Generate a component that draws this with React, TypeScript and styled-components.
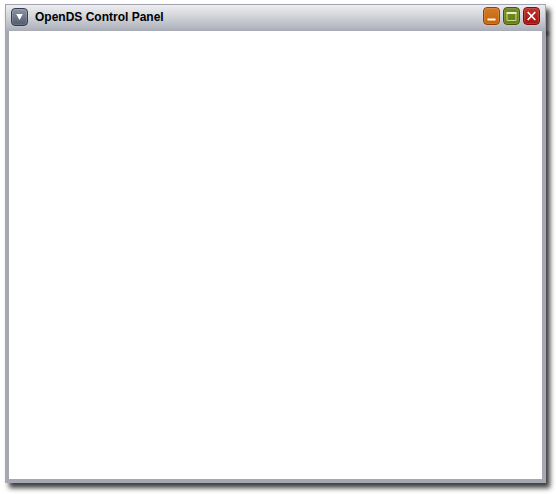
import React from "react";
import styled, { createGlobalStyle } from "styled-components";

const GlobalStyle = createGlobalStyle`
  * { box-sizing: border-box; }
  body { margin: 0; background: #fff; overflow: hidden; }
`;

const Desktop = styled.main`
  width: 556px;
  height: 494px;
  padding: 4px 0 0 5px;
  font-family: "Liberation Sans", Arial, sans-serif;
`;

const WindowFrame = styled.section`
  width: 541px;
  height: 479px;
  display: flex;
  flex-direction: column;
  background: #a5a8b1;
  box-shadow: 4px 5px 5px rgba(0, 0, 0, 0.76);
`;

/* The drop shadow deepens where the title bar's corner ends. */
const TitleBar = styled.header`
  position: relative;
  flex: 0 0 27px;
  display: flex;
  align-items: flex-start;
  padding: 3px 5px 0;
  border: 1px solid #a3a3b1;
  border-bottom-color: #a9acb5;
  background: linear-gradient(#eeeef1 0%, #d8dade 35%, #c5c8cf 65%, #adb1bb 100%);

  &::after {
    content: "";
    position: absolute;
    left: 100%;
    top: 24px;
    width: 5px;
    height: 9px;
    margin-left: 1px;
    background: radial-gradient(ellipse at left, rgba(0, 0, 0, 0.45), transparent 70%);
  }
`;

const Title = styled.h1`
  flex: 1;
  margin: 2px 0 0 7px;
  font-size: 12px;
  line-height: 14px;
  font-weight: bold;
  color: #000;
`;

const Controls = styled.div`
  display: flex;
  gap: 3px;
  margin-top: -1px;
`;

const TitleButton = styled.button<{ $edge: string; $top: string; $bottom: string }>`
  width: 17px;
  height: 18px;
  display: block;
  padding: 0;
  border: 1px solid ${(p) => p.$edge};
  border-radius: 4px;
  background: linear-gradient(${(p) => p.$top}, ${(p) => p.$bottom});
  box-shadow: inset 0 0 1px 1px rgba(255, 255, 255, 0.15), 0 0 1px rgba(255, 255, 255, 0.8);

  svg { display: block; }
`;

const Content = styled.div`
  flex: 1;
  margin: 0 4px 4px;
  background: #fff;
`;

export default function App() {
  return (
    <>
      <GlobalStyle />
      <Desktop>
        <WindowFrame>
          <TitleBar>
            <TitleButton aria-label="Window menu" $edge="#343d4e" $top="#8b94a4" $bottom="#505b6e">
              <svg width="15" height="16" viewBox="0 0 15 16">
                <path d="M4.2 5h6.6l-3.3 6z" fill="#fff" />
              </svg>
            </TitleButton>
            <Title>OpenDS Control Panel</Title>
            <Controls>
              <TitleButton aria-label="Minimize" $edge="#983e06" $top="#d17a2b" $bottom="#cb6100">
                <svg width="15" height="16" viewBox="0 0 15 16">
                  <path d="M3.5 10.5h8v2h-8z" fill="#fff" />
                </svg>
              </TitleButton>
              <TitleButton aria-label="Maximize" $edge="#405808" $top="#748a26" $bottom="#657f08">
                <svg width="15" height="16" viewBox="0 0 15 16">
                  <path d="M3 4.5h9v8H3z" fill="none" stroke="#cdd5a2" />
                  <path d="M2.5 4h10v2h-10z" fill="#e9edce" />
                </svg>
              </TitleButton>
              <TitleButton aria-label="Close" $edge="#850c0c" $top="#bd3430" $bottom="#a6100d">
                <svg width="15" height="16" viewBox="0 0 15 16">
                  <path d="M3.7 4l7.6 8m0-8l-7.6 8" fill="none" stroke="#fff" strokeWidth="1.7" />
                </svg>
              </TitleButton>
            </Controls>
          </TitleBar>
          <Content />
        </WindowFrame>
      </Desktop>
    </>
  );
}
